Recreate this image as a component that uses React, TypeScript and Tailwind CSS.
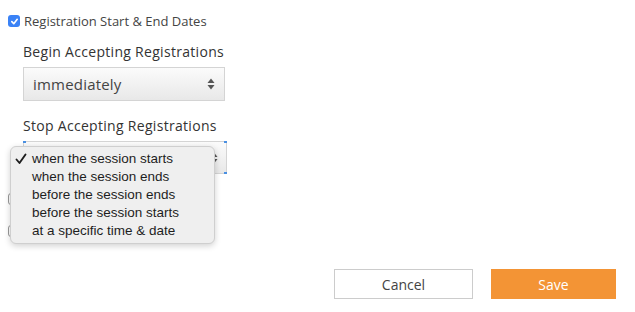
import { useState } from "react";

const stopOptions = [
  "when the session starts",
  "when the session ends",
  "before the session ends",
  "before the session starts",
  "at a specific time & date",
];

function Arrows() {
  return (
    <svg width="8" height="12" viewBox="0 0 8 12" className="text-[#555]">
      <path d="M4 0.5 L7.5 5 H0.5 Z" fill="currentColor" />
      <path d="M4 11.5 L7.5 7 H0.5 Z" fill="currentColor" />
    </svg>
  );
}

function CheckedBox() {
  return (
    <span className="flex h-[12px] w-[12px] items-center justify-center rounded-[3px] bg-[#3a82f6]">
      <svg width="9" height="9" viewBox="0 0 10 10">
        <path d="M2 5.2 L4.2 7.4 L8 2.6" stroke="white" strokeWidth="1.8" fill="none" strokeLinecap="round" strokeLinejoin="round" />
      </svg>
    </span>
  );
}

function MenuCheck() {
  return (
    <svg width="12" height="12" viewBox="0 0 12 12">
      <path d="M1.5 6.5 L4.5 10 L10.5 1.5" stroke="#1e1e1e" strokeWidth="1.9" fill="none" strokeLinecap="round" strokeLinejoin="round" />
    </svg>
  );
}

export default function App() {
  const [selected] = useState(0);

  return (
    <main className="relative h-[312px] w-[635px] overflow-hidden bg-white font-['Open_Sans',sans-serif] text-[#333]">
      <div className="flex items-center gap-[4px] pl-[8px] pt-[14px]">
        <CheckedBox />
        <span className="text-[13px] leading-[14px] text-[#444]">Registration Start &amp; End Dates</span>
      </div>

      <div className="pl-[23px] pt-[14px]">
        <p className="text-[14px] font-medium leading-[20px] tracking-[0.3px] text-[#333]">Begin Accepting Registrations</p>
        <div className="mt-[5px] flex h-[34px] w-[202px] items-center justify-between border border-[#d4d4d4] bg-gradient-to-b from-[#fbfbfb] to-[#e8e8e8] pl-[9px] pr-[9px]">
          <span className="text-[15px] tracking-[0.2px] text-[#444]">immediately</span>
          <Arrows />
        </div>

        <p className="mt-[15px] text-[14px] font-medium leading-[20px] tracking-[0.3px] text-[#333]">Stop Accepting Registrations</p>
        <div className="relative mt-[5px] flex h-[33px] w-[204px] items-center justify-end border border-[#d4d4d4] bg-gradient-to-b from-[#fbfbfb] to-[#e8e8e8] pr-[8px]">
          <Arrows />
          <span className="absolute -left-px -top-px h-[2px] w-[3px] bg-[#4a90e2]" />
          <span className="absolute -right-px -top-px h-[2px] w-[3px] bg-[#4a90e2]" />
          <span className="absolute -bottom-px -right-px h-[2px] w-[3px] bg-[#4a90e2]" />
        </div>
      </div>

      <div className="mt-[19px] flex flex-col gap-[20px] pl-[8px]">
        <span className="h-[12px] w-[12px] rounded-[3px] border border-[#999] bg-white" />
        <span className="h-[12px] w-[12px] rounded-[3px] border border-[#999] bg-white" />
      </div>

      <ul className="absolute left-[10px] top-[146px] w-[205px] rounded-[6px] border border-[#cfcfcf] bg-[#efefef] py-[3px] font-['Liberation_Sans',sans-serif] text-[13.5px] leading-[18px] text-[#1e1e1e] shadow-[0_2px_6px_rgba(0,0,0,0.18)]">
        {stopOptions.map((option, index) => (
          <li key={option} className="flex items-center">
            <span className="flex w-[21px] pl-[4px]">{index === selected ? <MenuCheck /> : null}</span>
            <span>{option}</span>
          </li>
        ))}
      </ul>

      <div className="absolute bottom-[13px] right-[19px] flex gap-[18px]">
        <button className="h-[30px] w-[139px] border border-[#cccccc] bg-white text-[14px] text-[#444]">Cancel</button>
        <button className="h-[30px] w-[125px] bg-[#f39435] text-[14px] text-white">Save</button>
      </div>
    </main>
  );
}
